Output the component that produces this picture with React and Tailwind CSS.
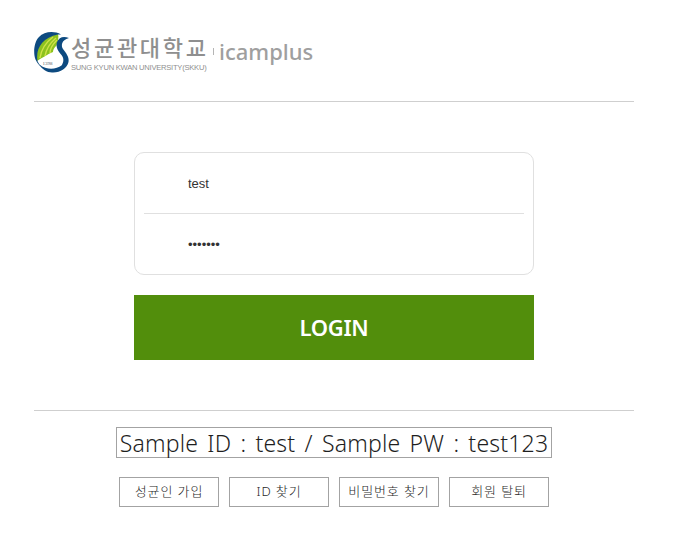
const cjk = "font-['Noto_Sans','Noto_Sans_CJK_KR',sans-serif]"

function SkkuMark() {
  return (
    <svg width="38" height="42" viewBox="0 0 38 42" className="shrink-0">
      {/* ginkgo leaf */}
      <path d="M3 30C1 18 7 6 24 3C25 6 24 11 22.5 14.5C20 17 19 19 19 21C14 23 8 27 3 30Z" fill="#8cc21f" />
      <path d="M6 27C7 20 11 12 19 6M11 25C12 19 15 13 22 7M16 22C16 18 18 14 23 9" fill="none" stroke="#cfe24a" strokeWidth="1.4" />
      {/* navy ring */}
      <path d="M27 3.5C20 -0.5 10 0.5 5 6C0 11 -1 22 1.5 28.5C3 32 5 34 7 36C5 33 4 31 3.5 30C1.5 18 8 6.5 24 3.5Z" fill="#0d4a80" />
      {/* S stroke */}
      <path d="M35 7C29 4.5 25 6.5 23 11C21.5 16 24 20 27.5 24C30 27 30 31 27.5 34.5C24 37.5 17 38.5 12 37C9 36 7 35 5 33C8 38.5 13 41.5 18 41.5C26 42 33 37.5 34.5 31C35.5 26 32 22 29 18C27 15 27 9 35 7Z" fill="#0d4a80" />
      <text x="8.5" y="33.5" fontSize="5" fill="#55606a" fontFamily="Liberation Serif, serif">1398</text>
    </svg>
  )
}

function LinkButton({ children }) {
  return (
    <a className="flex h-[30px] w-[100px] items-center justify-center border border-[#a3a3a3] pb-[1px] text-[13px] font-light tracking-[0.9px] text-[#1f1f1f]">
      {children}
    </a>
  )
}

export default function App() {
  return (
    <div className={`h-[537px] w-[673px] overflow-hidden bg-white ${cjk}`}>
      <div className="ml-[34px] w-[600px]">
        <div className="flex h-[102px] items-start border-b border-[#cfcfcf] pt-[31px]">
          <SkkuMark />
          <div className="ml-[-1px] flex w-[137px] flex-col text-[#8f8f8f]">
            <span className="mt-[3px] h-[27px] whitespace-nowrap text-[22px] leading-[27px] font-medium tracking-[2.7px]">성균관대학교</span>
            <span className="mt-[1px] font-['Liberation_Sans',sans-serif] text-[7.6px] leading-[11px] tracking-[-0.25px] whitespace-nowrap">SUNG KYUN KWAN UNIVERSITY(SKKU)</span>
          </div>
          <div className="mt-[17px] ml-[5px] h-[7px] w-px bg-[#b5b5b5]" />
          <span className="mt-[3px] ml-[5px] text-[22px] leading-[34px] font-medium text-[#9f9f9f]">icamplus</span>
        </div>

        <form className="mx-auto mt-[50px] w-[400px]">
          <div className="h-[123px] rounded-[10px] border border-[#e0e0e0] px-[9px]">
            <div className="flex h-[61px] items-center border-b border-[#e0e0e0] pt-[1px] pl-[44px] font-['Liberation_Sans',sans-serif] text-[13px] text-[#333]">
              test
            </div>
            <div className="flex h-[60px] items-center pt-[1px] pl-[44px] font-['Liberation_Sans',sans-serif] text-[13px] text-[#333]">
              •••••••
            </div>
          </div>
          <button type="button" className="mt-[20px] h-[65px] w-full bg-[#528e0c] text-[22px] font-semibold tracking-[-0.3px] text-white">
            LOGIN
          </button>
        </form>

        <div className="mt-[50px] flex flex-col items-center border-t border-[#cfcfcf] pt-[16px]">
          <div className="flex h-[31px] w-[436px] items-center justify-center border border-[#a3a3a3] pt-[1px] text-[23px] font-light [word-spacing:3px] tracking-[0.2px] text-[#1f1f1f]">
            Sample ID : test / Sample PW : test123
          </div>
          <div className="mt-[19px] flex gap-[10px]">
            <LinkButton>성균인 가입</LinkButton>
            <LinkButton>ID 찾기</LinkButton>
            <LinkButton>비밀번호 찾기</LinkButton>
            <LinkButton>회원 탈퇴</LinkButton>
          </div>
        </div>
      </div>
    </div>
  )
}
